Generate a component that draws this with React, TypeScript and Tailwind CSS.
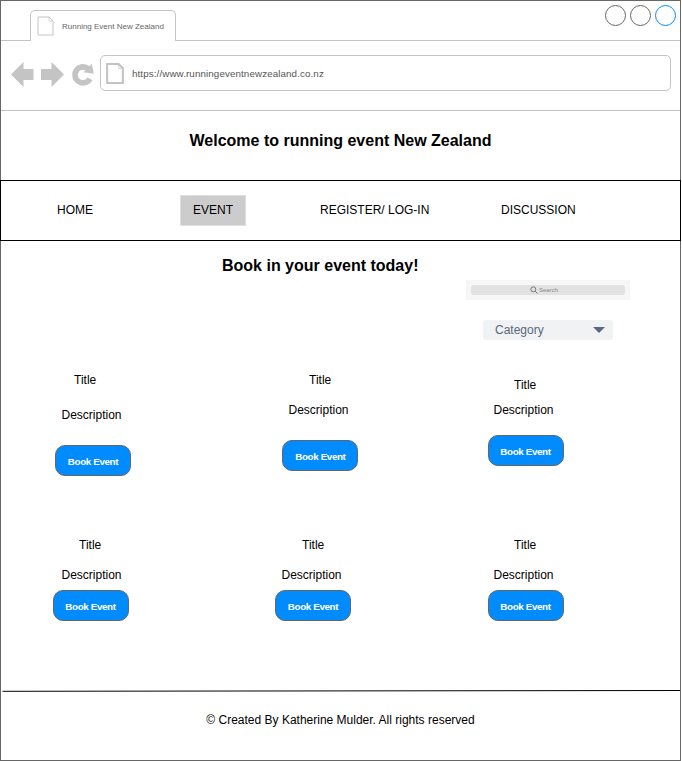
const PageIcon = ({ className, stroke }: { className: string; stroke: number }) => (
  <svg viewBox="0 0 17 20" className={className} fill="none" stroke="#c4c4c4" strokeWidth={stroke}>
    <path d="M1 1 H12 L16 5 V19 H1 Z" />
    <path d="M12 1 V5 H16" strokeWidth="0.7" />
  </svg>
);

const events = [
  { card: "pt-5 pl-[54px]", title: "ml-[19px]", desc: "ml-[6.5px] mt-[15px]", button: "mt-[20px]" },
  { card: "pt-5 pl-[54px]", title: "ml-[27px]", desc: "ml-[6.5px] mt-[10px]", button: "mt-[20px] ml-[0.4px]" },
  { card: "pt-[25px] pl-[32px]", title: "ml-[27px]", desc: "ml-[6.5px] mt-[5px]", button: "mt-[15px] ml-[0.5px]" },
  { card: "pt-5 pl-[51px]", title: "ml-[27px]", desc: "ml-[9.5px] mt-[10px]", button: "mt-[5px] ml-[0.5px]" },
  { card: "pt-5 pl-[47px]", title: "ml-[27px]", desc: "ml-[6.5px] mt-[10px]", button: "mt-[5px]" },
  { card: "pt-5 pl-[32px]", title: "ml-[27px]", desc: "ml-[6.5px] mt-[10px]", button: "mt-[5px] ml-[0.5px]" },
];

function TabStrip() {
  return (
    <div className="flex h-10 items-end">
      <div className="h-full w-[29px] border-b border-[#c4c4c4]" />
      <div className="flex h-[31px] w-[146px] items-center rounded-t-[5px] border border-b-0 border-[#c4c4c4] pl-[6px]">
        <PageIcon className="h-5 w-[17px]" stroke={1} />
        <span className="ml-2 pt-[2px] text-[8px] whitespace-nowrap text-[#666]">Running Event New Zealand</span>
      </div>
      <div className="flex h-full flex-1 justify-end gap-1 border-b border-[#c4c4c4] pt-1 pr-1">
        <span className="size-[21px] rounded-full border border-[#666]" />
        <span className="size-[21px] rounded-full border border-[#666]" />
        <span className="size-[21px] rounded-full border border-[#008cff]" />
      </div>
    </div>
  );
}

function Toolbar() {
  return (
    <div className="flex h-[70px] border-b border-[#c4c4c4] pt-[14px]">
      <svg viewBox="0 0 88 36" className="ml-[9px] h-9 w-[88px] shrink-0" fill="#c4c4c4">
        <path d="M1 19.5 L13.5 7 V14 H23.5 V25 H13.5 V32 Z" />
        <path d="M54 19.5 L41.5 7 V14 H31 V25 H41.5 V32 Z" />
        <path d="M80 23.8 A8 8 0 1 1 78.5 14" fill="none" stroke="#c4c4c4" strokeWidth="5.6" />
        <path d="M81.8 8.8 L83.8 18.8 L73.5 17.3 Z" />
      </svg>
      <div className="ml-[2px] flex h-9 w-[571px] items-center rounded-[5px] border border-[#c4c4c4] pl-[5px]">
        <PageIcon className="h-[21px] w-[18px]" stroke={2} />
        <span className="ml-2 pt-[2px] text-[9.8px] tracking-[0.1px] whitespace-nowrap text-[#555]">https://www.runningeventnewzealand.co.nz</span>
      </div>
    </div>
  );
}

function Navigation() {
  return (
    <nav className="relative -mx-px flex h-[61px] items-center border border-black text-xs">
      <span className="ml-[56px] w-[123px] pb-[2px]">HOME</span>
      <span className="flex h-[31px] w-[66px] items-center justify-center border border-[#e0e0e0] bg-[#ccc] pb-[2px]">EVENT</span>
      <span className="ml-[74px] w-[181px] pb-[2px]">REGISTER/ LOG-IN</span>
      <span className="pb-[2px]">DISCUSSION</span>
    </nav>
  );
}

export default function App() {
  return (
    <div className="h-[761px] w-[681px] border border-[#666] bg-white font-['Liberation_Sans',Arial,sans-serif] text-black">
      <TabStrip />
      <Toolbar />
      <h1 className="h-[69px] pt-[18px] text-center text-base font-bold">Welcome to running event New Zealand</h1>
      <Navigation />
      <h2 className="h-[39px] pt-[13px] pl-[221px] text-base font-bold">Book in your event today!</h2>
      <div className="ml-[465px] flex h-5 w-[164px] items-center justify-center bg-[#f6f6f6]">
        <div className="flex h-[10px] w-[154px] items-center rounded-[3px] bg-[#e2e2e2] pl-[59px]">
          <svg viewBox="0 0 8 8" className="size-2 shrink-0" fill="none" stroke="#777">
            <circle cx="3.3" cy="3.3" r="2.5" />
            <path d="M5.2 5.2 L7.5 7.500" />
          </svg>
          <span className="ml-[1px] pt-px text-[6px] leading-[9px] text-[#888]">Search</span>
        </div>
      </div>
      <div className="mt-5 ml-[482px] flex h-5 w-[130px] items-center justify-between rounded-[3px] bg-[#f0f2f4] pr-2 pl-3 text-xs text-[#596780]">
        <span>Category</span>
        <svg viewBox="0 0 12 6" className="h-[6px] w-3" fill="#596780"><path d="M0 0 H12 L6 6 Z" /></svg>
      </div>
      <div className="mt-[10px] grid h-[340px] grid-cols-[227px_227px_1fr] grid-rows-[165px_175px]">
        {events.map((event, index) => (
          <article key={index} className={`flex flex-col items-start text-xs leading-5 ${event.card}`}>
            <h3 className={event.title}>Title</h3>
            <p className={event.desc}>Description</p>
            <button className={`h-[31px] w-[76px] shrink-0 rounded-[10px] border border-[#666] bg-[#008cff] pt-[2px] text-[9.8px] tracking-[-0.36px] font-bold whitespace-nowrap text-white ${event.button}`}>
              Book Event
            </button>
          </article>
        ))}
      </div>
      <footer>
        <svg viewBox="0 0 679 2" className="block h-[2px] w-[679px]"><path d="M1.5 1.3 L679 0.5" stroke="black" /></svg>
        <p className="pt-[18px] text-center text-xs leading-5">© Created By Katherine Mulder. All rights reserved</p>
      </footer>
    </div>
  );
}
